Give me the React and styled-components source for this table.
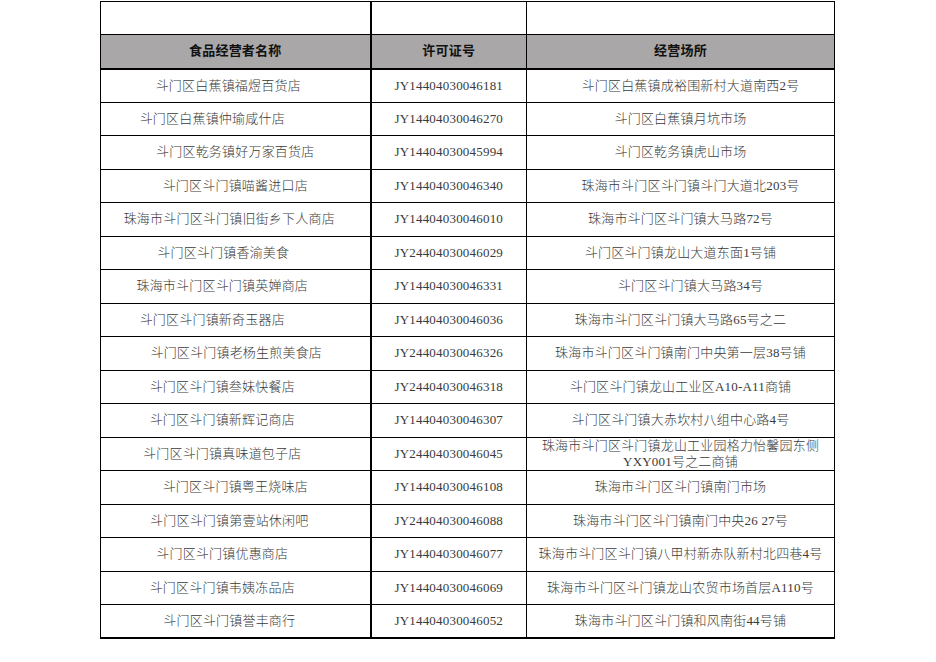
import React from "react";
import styled, { createGlobalStyle } from "styled-components";

const GlobalStyle = createGlobalStyle`
  html, body {
    margin: 0;
    padding: 0;
    background: #ffffff;
  }
  body {
    font-family: "Liberation Serif", "Noto Sans CJK SC", serif;
  }
`;

const Page = styled.div`
  width: 936px;
  height: 662px;
  padding: 1px 0 0 100px;
  box-sizing: border-box;
`;

const Sheet = styled.table`
  border-collapse: collapse;
  table-layout: fixed;
  width: 734px;
  color: #3a3a3a;
  font-size: 13px;
  letter-spacing: 0.2px;
  border-bottom: 2px solid #000;
`;

const Col = styled.col`
  width: ${props => props.w}px;
`;

const BlankRow = styled.tr`
  height: 33px;
`;

const HeadRow = styled.tr`
  height: 34px;
  background: #a9a7a7;
  border-bottom: 2px solid #000;
`;

const Row = styled.tr`
  height: 33.5px;
`;

const Cell = styled.td`
  border: 1px solid #000;
  border-right-width: ${props => (props.thick ? 2 : 1)}px;
  padding: 0 ${props => (props.shift < 0 ? -props.shift * 2 : 0)}px 0
    ${props => (props.shift > 0 ? props.shift * 2 : 0)}px;
  text-align: center;
  vertical-align: middle;
  white-space: nowrap;
  line-height: 16px;
  overflow: hidden;
  font-weight: ${props => (props.light ? 300 : 400)};
`;

const HeadCell = styled(Cell)`
  font-weight: bold;
  color: #111;
`;

const rows = [
  ["斗门区白蕉镇福煜百货店", -7, "JY14404030046181", "斗门区白蕉镇成裕围新村大道南西2号", 10],
  ["斗门区白蕉镇仲瑜咸什店", -23, "JY14404030046270", "斗门区白蕉镇月坑市场", 0],
  ["斗门区乾务镇好万家百货店", 0, "JY14404030045994", "斗门区乾务镇虎山市场", 0],
  ["斗门区斗门镇喵酱进口店", 0, "JY14404030046340", "珠海市斗门区斗门镇斗门大道北203号", 10],
  ["珠海市斗门区斗门镇旧街乡下人商店", -6, "JY14404030046010", "珠海市斗门区斗门镇大马路72号", 0],
  ["斗门区斗门镇香渝美食", -12, "JY24404030046029", "斗门区斗门镇龙山大道东面1号铺", 0],
  ["珠海市斗门区斗门镇英婵商店", -13, "JY14404030046331", "斗门区斗门镇大马路34号", 10],
  ["斗门区斗门镇新奇玉器店", -23, "JY14404030046036", "珠海市斗门区斗门镇大马路65号之二", 0],
  ["斗门区斗门镇老杨生煎美食店", 1, "JY24404030046326", "珠海市斗门区斗门镇南门中央第一层38号铺", 0],
  ["斗门区斗门镇叁妹快餐店", -13, "JY24404030046318", "斗门区斗门镇龙山工业区A10-A11商铺", 0],
  ["斗门区斗门镇新辉记商店", -13, "JY14404030046307", "斗门区斗门镇大赤坎村八组中心路4号", 0],
  ["斗门区斗门镇真味道包子店", -13, "JY24404030046045", ["珠海市斗门区斗门镇龙山工业园格力怡馨园东侧", "YXY001号之二商铺"], 0],
  ["斗门区斗门镇粤王烧味店", 0, "JY14404030046108", "珠海市斗门区斗门镇南门市场", 0],
  ["斗门区斗门镇第壹站休闲吧", -6, "JY24404030046088", "珠海市斗门区斗门镇南门中央26 27号", 0],
  ["斗门区斗门镇优惠商店", -13, "JY14404030046077", "珠海市斗门区斗门镇八甲村新赤队新村北四巷4号", 0],
  ["斗门区斗门镇韦姨冻品店", -13, "JY14404030046069", "珠海市斗门区斗门镇龙山农贸市场首层A110号", 0],
  ["斗门区斗门镇誉丰商行", -6, "JY14404030046052", "珠海市斗门区斗门镇和风南街44号铺", 0]
];

const Place = ({ text }) =>
  Array.isArray(text) ? (
    <>
      {text[0]}
      <br />
      {text[1]}
    </>
  ) : (
    text
  );

export default function App() {
  return (
    <Page>
      <GlobalStyle />
      <Sheet>
        <colgroup>
          <Col w={270} />
          <Col w={156} />
          <Col w={308} />
        </colgroup>
        <tbody>
          <BlankRow>
            <Cell thick />
            <Cell />
            <Cell />
          </BlankRow>
          <HeadRow>
            <HeadCell thick>食品经营者名称</HeadCell>
            <HeadCell>许可证号</HeadCell>
            <HeadCell>经营场所</HeadCell>
          </HeadRow>
          {rows.map(([name, shift, licence, place, placeShift]) => (
            <Row key={licence}>
              <Cell thick light shift={shift}>
                {name}
              </Cell>
              <Cell>{licence}</Cell>
              <Cell light shift={placeShift}>
                <Place text={place} />
              </Cell>
            </Row>
          ))}
        </tbody>
      </Sheet>
    </Page>
  );
}
